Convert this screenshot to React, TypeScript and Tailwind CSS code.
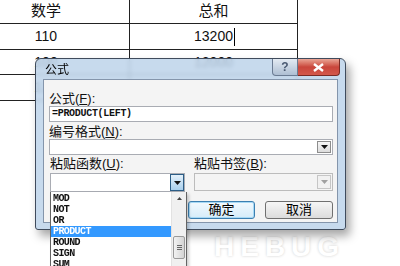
const cell = 'flex items-center justify-center border-r border-b border-[#222]';
const label = 'text-[13px] leading-[15px] text-[#111]';

const items = ['MOD', 'NOT', 'OR', 'PRODUCT', 'ROUND', 'SIGN', 'SUM'];

const Arrow = ({ color = '#111' }: { color?: string }) => (
  <svg width="7" height="4" viewBox="0 0 7 4"><path d="M0 0h7L3.5 4z" fill={color} /></svg>
);

export default function App() {
  return (
    <div
      className="relative w-[400px] h-[266px] overflow-hidden bg-white"
      style={{ fontFamily: '"Liberation Sans", "Noto Sans CJK SC", sans-serif' }}
    >
      {/* table behind */}
      <div className="grid grid-cols-[167px_168px] grid-rows-[24px_26px_25px_26px] -ml-[37px] w-[335px] text-[14px] text-[#111]">
        <div className={cell + ' text-[15px]'}>数学</div>
        <div className={cell + ' text-[15px]'}>总和</div>
        <div className={cell}>110</div>
        <div className={cell}>
          <span className="pl-[2px]">13200</span>
          <span className="ml-[1px] w-[1px] h-[18px] bg-black" />
        </div>
        <div className={cell}>100</div>
        <div className={cell}>12000</div>
        <div className={cell}>120</div>
        <div className={cell}>12000</div>
      </div>

      {/* watermark */}
      <div className="absolute left-[214px] top-[226px] text-[28px] font-bold tracking-[6px] text-white [text-shadow:0_0_3px_#cfcfcf]">
        HEBUG
      </div>

      {/* dialog */}
      <div className="absolute left-[35px] top-[58px] w-[311px] h-[172px] flex flex-col rounded-t-[6px] rounded-b-[3px] border border-[#3f4b5c] bg-[#bdd3ea]/85 backdrop-blur-[2px] shadow-[4px_6px_10px_rgba(0,0,0,0.35)]">
        <div className="h-[20px] flex items-start justify-between">
          <span className="pl-[9px] pt-[4px] text-[12px] leading-[14px] text-black">公式</span>
          <div className="flex mr-[5px]">
            <div className="w-[26px] h-[17px] flex items-center justify-center rounded-bl-[4px] border border-[#6a7b92] border-t-0 bg-gradient-to-b from-[#e3eaf2] to-[#aebfd3] text-[12px] font-bold text-[#4a5a72]">
              ?
            </div>
            <div className="w-[42px] h-[17px] flex items-center justify-center rounded-br-[4px] border border-l-0 border-t-0 border-[#7a2a24] bg-gradient-to-b from-[#e9a596] via-[#c9453b] to-[#d3584b]">
              <svg width="11" height="9" viewBox="0 0 11 9">
                <path d="M1 1l9 7M10 1L1 8" stroke="#fff" strokeWidth="2.4" />
              </svg>
            </div>
          </div>
        </div>

        <div className="relative mx-[7px] mb-[6px] flex-1 border border-[#8495ab] bg-[#f4f4f4] pl-[5px] pr-[4px] pt-[11px]">
          <div className={label}>
            公式(<u>F</u>):
          </div>
          <div className="h-[16px] border border-[#a9acb3] bg-white pl-[2px] text-[10px] leading-[14px] font-bold tracking-[-0.3px] text-[#111]" style={{ fontFamily: '"Liberation Mono", monospace' }}>
            =PRODUCT(LEFT)
          </div>
          <div className={label + ' mt-[2px]'}>
            编号格式(<u>N</u>):
          </div>
          <div className="h-[16px] flex justify-end items-center border border-[#a9acb3] bg-white pr-[1px]">
            <div className="w-[14px] h-[12px] flex items-center justify-center border border-[#8d8d8d] bg-gradient-to-b from-[#f6f6f6] to-[#dcdcdc]">
              <Arrow />
            </div>
          </div>

          <div className="flex mt-[1px]">
            <div className="relative w-[138px] pl-[1px]">
              <div className={label}>
                粘贴函数(<u>U</u>):
              </div>
              <div className="h-[19px] mt-[2px] flex justify-end border border-[#a9acb3] bg-white">
                <div className="w-[14px] flex items-center justify-center border border-[#2b5d86] bg-gradient-to-b from-[#e4f1fb] to-[#a9cfec]">
                  <Arrow />
                </div>
              </div>
              {/* drop list */}
              <div className="absolute left-[1px] top-[36px] w-[137px] h-[90px] flex border border-[#646464] border-t-0 bg-white shadow-[2px_2px_3px_rgba(0,0,0,0.2)]">
                <div className="flex-1 pt-[1px] text-[10px] font-bold tracking-[-0.6px] text-[#111]" style={{ fontFamily: '"Liberation Mono", monospace' }}>
                  {items.map((it) => (
                    <div
                      key={it}
                      className={
                        'h-[11px] leading-[11px] pl-[2px] ' + (it === 'PRODUCT' ? 'bg-[#3399ff] text-white' : '')
                      }
                    >
                      {it}
                    </div>
                  ))}
                </div>
                <div className="w-[15px] flex flex-col items-center border-l border-[#e2e2e2] bg-[#f0f0f0]">
                  <svg className="mt-[5px]" width="5" height="3" viewBox="0 0 5 3"><path d="M0 3h5L2.5 0z" fill="#444" /></svg>
                  <div className="mt-[36px] w-[12px] h-[23px] flex flex-col items-center justify-center gap-[1px] rounded-[2px] border border-[#9a9a9a] bg-gradient-to-r from-[#f2f2f2] to-[#d4d4d4]">
                    <span className="w-[5px] h-[1px] bg-[#666]" />
                    <span className="w-[5px] h-[1px] bg-[#666]" />
                    <span className="w-[5px] h-[1px] bg-[#666]" />
                  </div>
                </div>
              </div>
            </div>

            <div className="flex-1 pl-[3px]">
              <div className={label + ' pl-[6px] text-[#8a8a8a]'}>
                粘贴书签(<u>B</u>):
              </div>
              <div className="ml-[6px] h-[18px] mt-[2px] flex justify-end items-center border border-[#bcbcbc] bg-[#f4f4f4] pr-[1px]">
                <div className="w-[14px] h-[14px] flex items-center justify-center border border-[#c6c6c6] bg-[#f1f1f1]">
                  <Arrow color="#a0a0a0" />
                </div>
              </div>
              <div className="flex gap-[10px] mt-[10px]">
                <button className="w-[67px] h-[18px] rounded-[3px] border border-[#3c7fb1] bg-gradient-to-b from-[#f2f9fe] to-[#d6ecf9] text-[13px] leading-[14px] text-black shadow-[inset_0_0_0_1px_#a7d9f5]">
                  确定
                </button>
                <button className="w-[68px] h-[18px] rounded-[3px] border border-[#707070] bg-gradient-to-b from-[#f6f6f6] to-[#dcdcdc] text-[13px] leading-[14px] text-black">
                  取消
                </button>
              </div>
            </div>
          </div>
        </div>
      </div>
    </div>
  );
}
